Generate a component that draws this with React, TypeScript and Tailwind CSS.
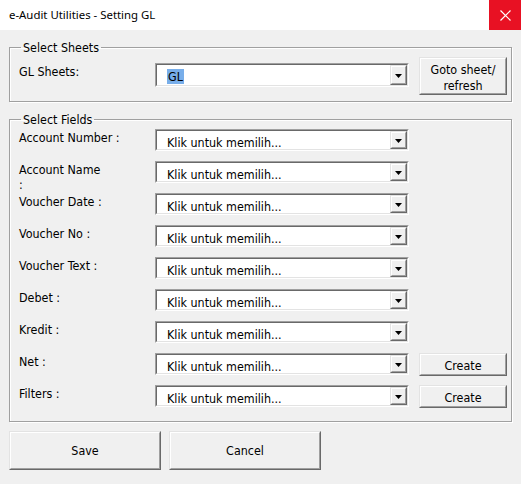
import React from "react";

const FONT = { fontFamily: '"DejaVu Sans Condensed", "DejaVu Sans", Tahoma, sans-serif', fontStretch: "condensed" as const };

function DropArrow() {
  return (
    <div className="h-full w-[17px] border border-t-[#e3e3e3] border-l-[#e3e3e3] border-b-[#696969] border-r-[#696969] bg-[#f0f0f0]">
      <div className="flex h-full w-full items-center justify-center border border-t-white border-l-white border-b-[#a0a0a0] border-r-[#a0a0a0]">
        <svg width="7" height="4" viewBox="0 0 7 4" className="mt-[1px]">
          <path d="M0 0h7L3.5 4z" fill="#000" />
        </svg>
      </div>
    </div>
  );
}

function Combo({ text, selected, h = "h-[22px]" }: { text: string; selected?: boolean; h?: string }) {
  return (
    <div className={`${h} w-[254px] shrink-0 border border-t-[#a0a0a0] border-l-[#a0a0a0] border-b-white border-r-white`}>
      <div className="flex h-full w-full border border-t-[#696969] border-l-[#696969] border-b-[#e3e3e3] border-r-[#e3e3e3] bg-white">
        <div className="flex-1 pl-[10px] pt-[4px] text-[12.4px] leading-[15px] text-black">
          {selected ? <span className="bg-[#78aeea] px-[1px]">{text}</span> : <span>{text}</span>}
        </div>
        <DropArrow />
      </div>
    </div>
  );
}

function Btn({ children, className, inner = "" }: { children: React.ReactNode; className: string; inner?: string }) {
  return (
    <div className={`${className} shrink-0 border border-t-[#e3e3e3] border-l-[#e3e3e3] border-b-[#696969] border-r-[#696969] bg-[#f0f0f0]`}>
      <div className={`${inner} flex h-full w-full items-center justify-center border border-t-white border-l-white border-b-[#a0a0a0] border-r-[#a0a0a0] text-center text-[12.4px] leading-[15px] text-black`}>
        {children}
      </div>
    </div>
  );
}

const fields: { label: React.ReactNode; create?: boolean }[] = [
  { label: "Account Number :" },
  { label: (<>Account Name<br />:</>) },
  { label: "Voucher Date :" },
  { label: "Voucher No :" },
  { label: "Voucher Text :" },
  { label: "Debet :" },
  { label: "Kredit :" },
  { label: "Net :", create: true },
  { label: "Filters :", create: true },
];

export default function App() {
  return (
    <div className="relative h-[484px] w-[521px] overflow-hidden bg-[#f0f0f0] text-black" style={FONT}>
      <div className="flex h-[30px] items-center justify-between bg-white">
        <div className="pl-[9px] text-[11.4px] leading-[16px]" style={{ fontFamily: '"Segoe UI", "Noto Sans", "Open Sans", sans-serif' }}>
          e-Audit Utilities - Setting GL
        </div>
        <div className="flex h-[30px] w-[32px] items-center justify-center bg-[#e81123]">
          <svg width="11" height="11" viewBox="0 0 11 11">
            <path d="M0.5 0.5L10.5 10.5M10.5 0.5L0.5 10.5" stroke="#fff" strokeWidth="1.2" />
          </svg>
        </div>
      </div>

      <div className="px-[9px]">
        <fieldset className="mt-[10px] border border-[#a0a0a0] pb-[6px] shadow-[1px_1px_0_#fff,inset_1px_1px_0_#fff]">
          <legend className="ml-[11px] px-[2px] text-[12.4px] leading-[15px]">Select Sheets</legend>
          <div className="flex items-start pl-[9px] pt-[2px]">
            <div className="mt-[7px] w-[136px] text-[12.4px] leading-[15px]">GL Sheets:</div>
            <div className="mt-[6px]">
              <Combo text="GL" selected h="h-[24px]" />
            </div>
            <Btn className="ml-[10px] h-[38px] w-[88px]" inner="pt-[3px]">
              <span className="leading-[16px]">Goto sheet/<br />refresh</span>
            </Btn>
          </div>
        </fieldset>

        <fieldset className="mt-[10px] border border-[#a0a0a0] pb-[14px] shadow-[1px_1px_0_#fff,inset_1px_1px_0_#fff]">
          <legend className="ml-[11px] px-[2px] text-[12.4px] leading-[15px]">Select Fields</legend>
          <div className="flex flex-col gap-[10px] pl-[9px] pt-[2px]">
            {fields.map((f, i) => (
              <div key={i} className="flex h-[22px] items-start">
                <div className="mt-[1px] w-[136px] text-[12.4px] leading-[15px]">{f.label}</div>
                <Combo text="Klik untuk memilih..." />
                {f.create && <Btn className="ml-[10px] h-[23px] w-[88px]" inner="pt-[2px]">Create</Btn>}
              </div>
            ))}
          </div>
        </fieldset>

        <div className="mt-[9px] flex gap-[8px]">
          <Btn className="h-[39px] w-[152px]">Save</Btn>
          <Btn className="h-[39px] w-[152px]">Cancel</Btn>
        </div>
      </div>
    </div>
  );
}
